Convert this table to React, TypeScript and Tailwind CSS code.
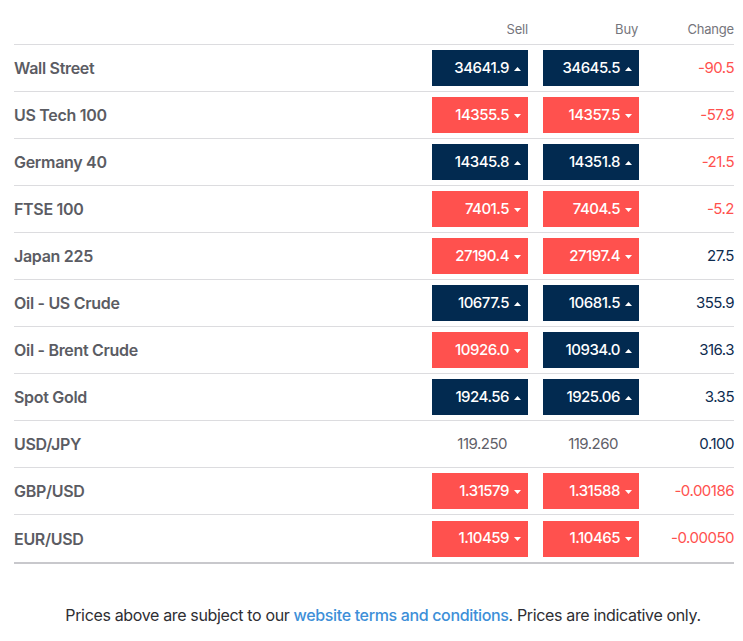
type Dir = 'up' | 'down' | 'none';

interface Market {
    name: string;
    sell: string;
    buy: string;
    sellDir: Dir;
    buyDir: Dir;
    change: string;
}

const markets: Market[] = [
    { name: 'Wall Street', sell: '34641.9', buy: '34645.5', sellDir: 'up', buyDir: 'up', change: '-90.5' },
    { name: 'US Tech 100', sell: '14355.5', buy: '14357.5', sellDir: 'down', buyDir: 'down', change: '-57.9' },
    { name: 'Germany 40', sell: '14345.8', buy: '14351.8', sellDir: 'up', buyDir: 'up', change: '-21.5' },
    { name: 'FTSE 100', sell: '7401.5', buy: '7404.5', sellDir: 'down', buyDir: 'down', change: '-5.2' },
    { name: 'Japan 225', sell: '27190.4', buy: '27197.4', sellDir: 'down', buyDir: 'down', change: '27.5' },
    { name: 'Oil - US Crude', sell: '10677.5', buy: '10681.5', sellDir: 'up', buyDir: 'up', change: '355.9' },
    { name: 'Oil - Brent Crude', sell: '10926.0', buy: '10934.0', sellDir: 'down', buyDir: 'up', change: '316.3' },
    { name: 'Spot Gold', sell: '1924.56', buy: '1925.06', sellDir: 'up', buyDir: 'up', change: '3.35' },
    { name: 'USD/JPY', sell: '119.250', buy: '119.260', sellDir: 'none', buyDir: 'none', change: '0.100' },
    { name: 'GBP/USD', sell: '1.31579', buy: '1.31588', sellDir: 'down', buyDir: 'down', change: '-0.00186' },
    { name: 'EUR/USD', sell: '1.10459', buy: '1.10465', sellDir: 'down', buyDir: 'down', change: '-0.00050' },
];

function Price({ value, dir }: { value: string; dir: Dir }) {
    if (dir === 'none') {
        return <div className="flex h-9 w-24 items-center justify-end pr-[21px] text-[#5f6068]">{value}</div>;
    }
    const bg = dir === 'up' ? 'bg-[#022a50]' : 'bg-[#ff514e]';
    return (
        <div className={`flex h-9 w-24 items-center justify-end gap-[5px] pr-[7px] font-medium text-white ${bg}`}>
            <span>{value}</span>
            <svg width="7" height="4" viewBox="0 0 7 4" className="mt-px">
                {dir === 'up' ? <path d="M0 4 L3.5 0 L7 4 Z" fill="white" /> : <path d="M0 0 L3.5 4 L7 0 Z" fill="white" />}
            </svg>
        </div>
    );
}

export default function App() {
    return (
        <div className="bg-white pr-[9px] pl-[14px] font-['Inter','Lato',sans-serif] text-[15px] tracking-[-0.5px]">
            {/* Header */}
            <div className="flex h-[45px] items-end border-b border-[#dcdcdf] pb-[5px] text-[13px] tracking-[-0.2px] text-[#75757c]">
                <div className="flex-1" />
                <div className="w-24 text-right">Sell</div>
                <div className="ml-[15px] w-24 pr-px text-right">Buy</div>
                <div className="w-[95px] text-right">Change</div>
            </div>

            {/* Rows */}
            <div className="border-b-2 border-[#c8c8cc]">
                {markets.map((m, i) => (
                    <div
                        key={m.name}
                        className={`flex h-[47px] items-center ${i < markets.length - 1 ? 'border-b border-[#dcdcdf]' : ''}`}
                    >
                        <div className="flex-1 text-[16px] font-semibold tracking-[-0.3px] text-[#5b5c63]">{m.name}</div>
                        <Price value={m.sell} dir={m.sellDir} />
                        <div className="ml-[15px]">
                            <Price value={m.buy} dir={m.buyDir} />
                        </div>
                        <div className={`w-[95px] text-right ${m.change.startsWith('-') ? 'text-[#ff514e]' : 'text-[#0d2b4f]'}`}>
                            {m.change}
                        </div>
                    </div>
                ))}
            </div>

            {/* Footer */}
            <p className="pt-[39px] pl-[18px] text-center text-[16px] tracking-[-0.35px] text-[#2e2e33]">
                Prices above are subject to our{' '}
                <a className="font-medium text-[#3d8fd8]" href="#">
                    website terms and conditions
                </a>
                . Prices are indicative only.
            </p>
        </div>
    );
}
